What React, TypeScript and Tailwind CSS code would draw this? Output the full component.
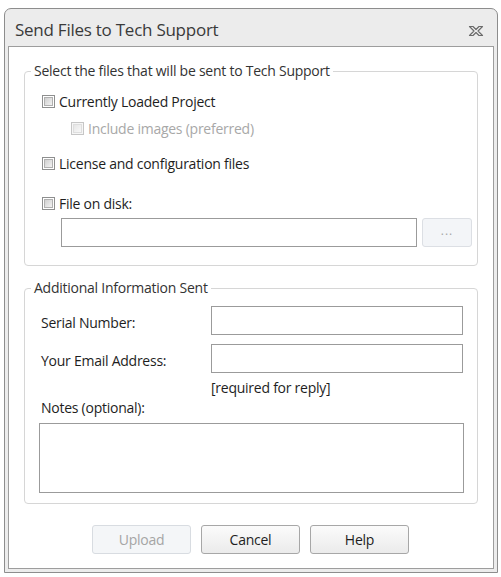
import React from 'react';

const font = { fontFamily: '"Open Sans", "Noto Sans", sans-serif' };

function Box({ disabled = false }: { disabled?: boolean }) {
  return (
    <span
      className={`flex h-[13px] w-[13px] shrink-0 items-center justify-center border ${
        disabled ? 'border-[#c6c6c6] bg-[#f6f6f6]' : 'border-[#8e8f8f] bg-white'
      }`}
    >
      <span
        className={`h-[9px] w-[9px] border ${
          disabled
            ? 'border-[#dedede] bg-gradient-to-br from-[#e6e6e6] to-[#f8f8f8]'
            : 'border-[#b0b0b0] bg-gradient-to-br from-[#cfcfcf] to-[#f2f2f2]'
        }`}
      />
    </span>
  );
}

function Check({ label, disabled = false }: { label: string; disabled?: boolean }) {
  return (
    <label className="flex h-[20px] items-center gap-[4px]">
      <Box disabled={disabled} />
      <span className={disabled ? 'text-[#a8a8a8]' : 'text-[#1e1e1e]'}>{label}</span>
    </label>
  );
}

function Button({ label, disabled = false }: { label: string; disabled?: boolean }) {
  return (
    <button
      type="button"
      className={`h-[29px] w-[99px] rounded-[3px] border text-[14px] ${
        disabled
          ? 'border-[#d8dce1] bg-[#f4f6f8] text-[#a5a5a5]'
          : 'border-[#a7a7a7] bg-gradient-to-b from-[#fbfbfb] to-[#ebebeb] text-[#1e1e1e]'
      }`}
    >
      {label}
    </button>
  );
}

export default function App() {
  return (
    <div className="h-[577px] w-[501px] bg-white pl-[4px] pt-[8px] text-[14px] tracking-[-0.25px]" style={font}>
      <div className="flex h-[565px] w-[494px] flex-col rounded-t-[7px] border border-[#8d8d8d] bg-[#ececec] px-[3px] pb-[3px]">
        {/* title bar */}
        <div className="flex h-[37px] shrink-0 items-center justify-between pl-[7px] pr-[10px] pt-[5px]">
          <span className="text-[17px] text-[#3a3a3a]">Send Files to Tech Support</span>
          <svg width="16" height="12" viewBox="0 0 16 12" className="mt-[2px]">
            <path
              d="M1.5 1.5 H5 L8 4.5 L11 1.5 H14.5 L10 6 L14.5 10.5 H11 L8 7.5 L5 10.5 H1.5 L6 6 Z"
              fill="#f4f4f4"
              stroke="#6b6b6b"
              strokeWidth="1.2"
              strokeLinejoin="round"
            />
          </svg>
        </div>

        {/* content */}
        <div className="flex flex-1 flex-col border border-[#9d9d9d] bg-white px-[15px] pb-[14px]">
          <fieldset className="mt-[15px] rounded-[4px] border border-[#d6d6d6] pb-[18px] pl-[6px]">
            <legend className="px-[3px] leading-[18px] text-[#333]">
              Select the files that will be sent to Tech Support
            </legend>
            <div className="mt-[11px] pl-[11px]">
              <Check label="Currently Loaded Project" />
            </div>
            <div className="mt-[7px] pl-[40px]">
              <Check label="Include images (preferred)" disabled />
            </div>
            <div className="mt-[15px] pl-[11px]">
              <Check label="License and configuration files" />
            </div>
            <div className="mt-[20px] pl-[11px]">
              <Check label="File on disk:" />
            </div>
            <div className="mt-[5px] flex gap-[5px] pl-[30px]">
              <input className="h-[29px] w-[356px] border border-[#9b9b9b] bg-white outline-none" />
              <button
                type="button"
                className="h-[29px] w-[50px] rounded-[3px] border border-[#dcdfe4] bg-[#f3f5f8] pb-[4px] text-[12px] tracking-[1px] text-[#a6a6a6]"
              >
                ...
              </button>
            </div>
          </fieldset>

          <fieldset className="mt-[13px] rounded-[4px] border border-[#d6d6d6] pb-[10px] pl-[6px]">
            <legend className="px-[3px] leading-[18px] text-[#333]">Additional Information Sent</legend>
            <div className="mt-[9px] flex h-[29px] items-center pl-[10px]">
              <span className="w-[170px] pt-[3px] text-[#1e1e1e]">Serial Number:</span>
              <input className="h-[29px] w-[252px] border border-[#9b9b9b] bg-white outline-none" />
            </div>
            <div className="mt-[9px] flex h-[29px] items-center pl-[10px]">
              <span className="w-[170px] pt-[3px] text-[#1e1e1e]">Your Email Address:</span>
              <input className="h-[29px] w-[252px] border border-[#9b9b9b] bg-white outline-none" />
            </div>
            <div className="mt-[5px] flex h-[18px] items-center pl-[180px] text-[#1e1e1e]">
              [required for reply]
            </div>
            <div className="mt-[2px] flex h-[18px] items-center pl-[10px] text-[#1e1e1e]">
              Notes (optional):
            </div>
            <textarea className="ml-[8px] mt-[7px] block h-[70px] w-[425px] resize-none border border-[#9b9b9b] bg-white outline-none" />
          </fieldset>

          <div className="mt-[21px] flex gap-[10px] pl-[68px]">
            <Button label="Upload" disabled />
            <Button label="Cancel" />
            <Button label="Help" />
          </div>
        </div>
      </div>
    </div>
  );
}
